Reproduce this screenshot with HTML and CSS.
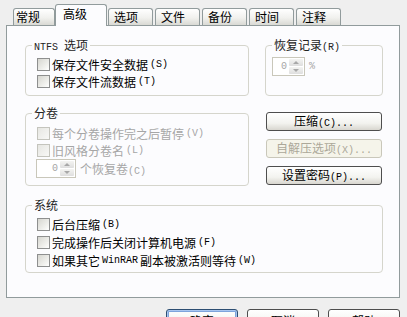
FILE: index.html
```html
<!DOCTYPE html>
<html lang="zh-CN">
<head>
  <meta charset="UTF-8" />
  <title>压缩文件名和参数</title>
  <link rel="stylesheet" href="styles.css">
</head>
<body>
  <div class="tabs">
    <div class="tab first">常规</div>
    <div class="tab active">高级</div>
    <div class="tab">选项</div>
    <div class="tab">文件</div>
    <div class="tab">备份</div>
    <div class="tab">时间</div>
    <div class="tab">注释</div>
  </div>

  <div class="panel">
    <fieldset class="group ntfs">
      <legend><span class="en">NTFS </span>选项</legend>
      <label class="check"><span class="box"></span>保存文件安全数据<span class="en">(S)</span></label>
      <label class="check"><span class="box"></span>保存文件流数据<span class="en">(T)</span></label>
    </fieldset>

    <fieldset class="group recovery">
      <legend>恢复记录<span class="en">(R)</span></legend>
      <div class="spin-row disabled">
        <div class="spin small">
          <span class="value en">0</span>
          <span class="arrows"><span class="up"></span><span class="down"></span></span>
        </div>
        <span class="en">%</span>
      </div>
    </fieldset>

    <fieldset class="group volume disabled">
      <legend>分卷</legend>
      <label class="check"><span class="box"></span>每个分卷操作完之后暂停<span class="en">(V)</span></label>
      <label class="check"><span class="box"></span>旧风格分卷名<span class="en">(L)</span></label>
      <div class="spin-row">
        <div class="spin">
          <span class="value en">0</span>
          <span class="arrows"><span class="up"></span><span class="down"></span></span>
        </div>
        <span>个恢复卷<span class="en">(C)</span></span>
      </div>
    </fieldset>

    <div class="actions">
      <button class="btn">压缩<span class="en">(C)...</span></button>
      <button class="btn" disabled>自解压选项<span class="en">(X)...</span></button>
      <button class="btn">设置密码<span class="en">(P)...</span></button>
    </div>

    <fieldset class="group system">
      <legend>系统</legend>
      <label class="check"><span class="box"></span>后台压缩<span class="en">(B)</span></label>
      <label class="check"><span class="box"></span>完成操作后关闭计算机电源<span class="en">(F)</span></label>
      <label class="check"><span class="box"></span>如果其它<span class="en"> WinRAR </span>副本被激活则等待<span class="en">(W)</span></label>
    </fieldset>
  </div>

  <div class="footer">
    <button class="btn big default">确定</button>
    <button class="btn big">取消</button>
    <button class="btn big">帮助</button>
  </div>
</body>
</html>
```

FILE: styles.css
```css
body {
  margin: 0;
  width: 407px;
  height: 317px;
  overflow: hidden;
  background: #efefef;
  font-family: "Noto Sans CJK SC", sans-serif;
  font-size: 12px;
  color: #000;
}

.en {
  font-family: "Liberation Mono", monospace;
  font-size: 10px;
}

/* tab strip */
.tabs {
  display: flex;
  align-items: flex-end;
  height: 25px;
  padding-left: 13px;
}

.tab {
  height: 17px;
  box-sizing: border-box;
  padding: 0 14px 0 5px;
  margin-right: 2px;
  border: 1px solid #919b9c;
  border-bottom: none;
  border-radius: 3px 3px 0 0;
  background: linear-gradient(#ffffff, #f1f1ee 55%, #d9d9d4);
  line-height: 16px;
  white-space: nowrap;
}

.tab.first {
  padding-left: 2px;
  margin-right: 0;
}

.tab.active {
  position: relative;
  z-index: 1;
  height: 22px;
  margin: 0 1px -1px 0;
  padding: 1px 19px 0 7px;
  background: #fcfcfe;
}

/* page body */
.panel {
  margin-left: 6px;
  width: 394px;
  height: 273px;
  box-sizing: border-box;
  border: 1px solid #919b9c;
  background: #fcfcfe;
  display: grid;
  grid-template-columns: 224px 118px;
  column-gap: 16px;
  align-content: start;
  padding: 12px 0 0 18px;
}

.group {
  margin: 0;
  min-width: 0;
  border: 1px solid #d5d5cc;
  border-radius: 4px;
  padding: 4px 0 5px 11px;
}

.group legend {
  padding: 0 2px;
  margin-left: -5px;
  line-height: 14px;
  height: 14px;
  color: #222;
}

.check {
  display: flex;
  align-items: center;
  gap: 2px;
  height: 17px;
  white-space: nowrap;
}

.box {
  width: 13px;
  height: 13px;
  box-sizing: border-box;
  border: 1px solid #8e8f8f;
  background: linear-gradient(135deg, #d6d6d0, #f2f2ef 70%, #ffffff);
}

.disabled .check,
.spin-row.disabled,
.volume .spin-row {
  color: #a6a6a6;
}

.disabled .box {
  border-color: #c4c4bd;
  background: linear-gradient(135deg, #e6e6e2, #f8f8f6);
}

.recovery {
  padding: 5px 0 0 6px;
}

.recovery legend {
  margin-left: 0;
}

.volume {
  margin-top: 10px;
  padding: 5px 0 7px 11px;
}

.system {
  grid-column: 1 / -1;
  margin-top: 12px;
  padding: 3px 0 3px 11px;
}

.system .check {
  height: 18px;
}

/* spin boxes */
.spin-row {
  display: flex;
  align-items: center;
  gap: 4px;
  height: 19px;
}

.volume .spin-row {
  margin-left: -1px;
}

.spin {
  display: flex;
  width: 40px;
  height: 19px;
  box-sizing: border-box;
  border: 1px solid #c9c7ba;
  background: #fff;
}

.spin.small {
  width: 33px;
}

.spin .value {
  flex: 1;
  text-align: right;
  padding-right: 2px;
  line-height: 17px;
  color: #a6a6a6;
}

.arrows {
  display: flex;
  flex-direction: column;
  width: 14px;
  padding: 1px 1px 1px 0;
  gap: 1px;
}

.arrows span {
  flex: 1;
  display: flex;
  align-items: center;
  justify-content: center;
  background: linear-gradient(#f4f4f2, #dedede);
  border-radius: 1px;
}

.up::after,
.down::after {
  content: "";
  border-left: 3px solid transparent;
  border-right: 3px solid transparent;
}

.up::after {
  border-bottom: 3px solid #a8a8a8;
}

.down::after {
  border-top: 3px solid #a8a8a8;
}

/* buttons */
.actions {
  margin-top: 10px;
  padding: 6px 1px 0;
  display: flex;
  flex-direction: column;
  gap: 8px;
}

.btn {
  height: 19px;
  width: 116px;
  padding: 0;
  box-sizing: border-box;
  border: 1px solid #4e4e4e;
  border-radius: 3px;
  background: linear-gradient(#ffffff, #f3f3ef 60%, #d8d6cf);
  font-family: "Noto Sans CJK SC", sans-serif;
  font-size: 12px;
  line-height: 16px;
  color: #000;
}

.btn:disabled {
  border-color: #c9c7ba;
  background: #f5f4ea;
  color: #aca899;
}

.footer {
  display: flex;
  justify-content: flex-end;
  gap: 9px;
  padding: 11px 7px 0 0;
}

.btn.big {
  width: 72px;
  height: 23px;
  line-height: 20px;
}

.btn.default {
  border-color: #2d4e72;
  box-shadow: inset 0 0 0 1px #a9c6f0, inset 0 0 0 2px #7ea4dc;
}
```
